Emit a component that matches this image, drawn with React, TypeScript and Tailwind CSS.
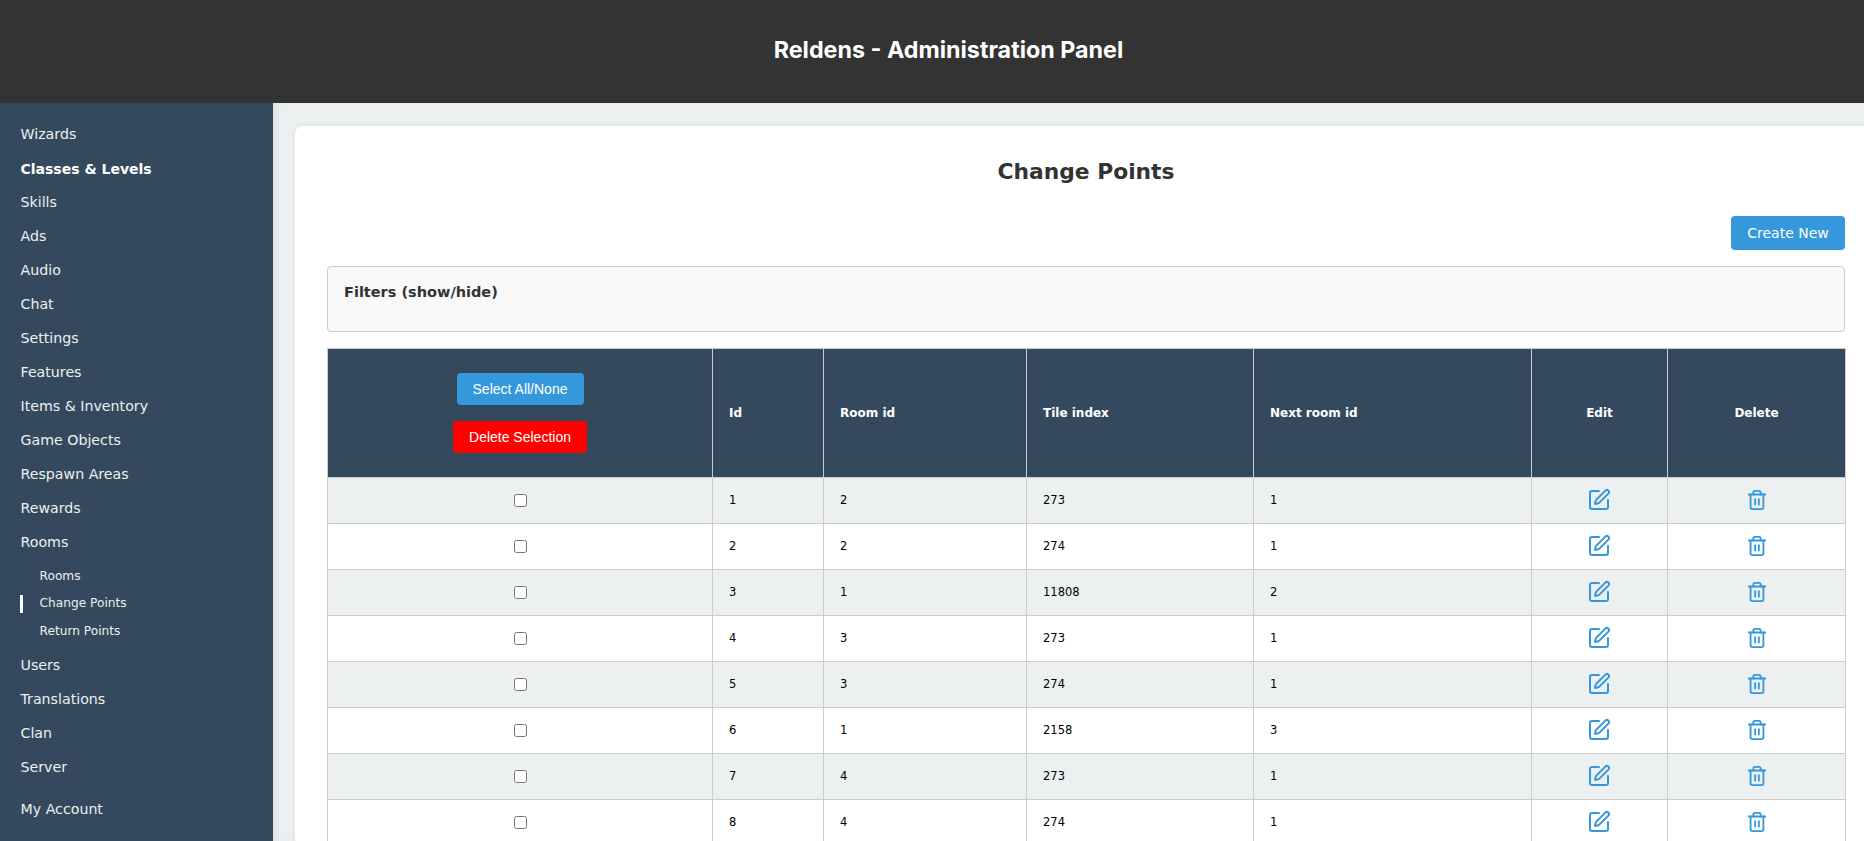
import { SquarePen, Trash2 } from "lucide-react";

const nav = ["Wizards", "Classes & Levels", "Skills", "Ads", "Audio", "Chat", "Settings", "Features", "Items & Inventory", "Game Objects", "Respawn Areas", "Rewards", "Rooms"];
const nav2 = ["Users", "Translations", "Clan", "Server"];
const rows = [
  [1, 2, 273, 1],
  [2, 2, 274, 1],
  [3, 1, 11808, 2],
  [4, 3, 273, 1],
  [5, 3, 274, 1],
  [6, 1, 2158, 3],
  [7, 4, 273, 1],
  [8, 4, 274, 1],
];

function NavItem({ label }: { label: string }) {
  const bold = label === "Classes & Levels";
  return (
    <a className={`flex h-[34px] items-center pl-[20.5px] text-[#ecf0f1] ${bold ? "text-[14px] font-bold text-white" : "text-[14.2px]"}`}>{label}</a>
  );
}

function SubItem({ label, active }: { label: string; active?: boolean }) {
  return (
    <a className="relative flex h-[27.5px] items-center pl-[39.5px] text-[12.2px] text-[#ecf0f1]">
      {active && <span className="absolute left-5 top-[5px] h-[18px] w-[3px] bg-white" />}
      {label}
    </a>
  );
}

export default function App() {
  return (
    <div className="flex h-[841px] flex-col overflow-hidden font-['DejaVu_Sans',Verdana,sans-serif] text-[#333]">
      <header className="flex h-[103px] shrink-0 items-center justify-center bg-[#333333] pb-[2px] pl-[33px]">
        <h1 className="font-['Inter',sans-serif] text-[23.3px] font-bold text-white">Reldens - Administration Panel</h1>
      </header>
      <div className="flex min-h-0 flex-1">
        <nav className="w-[273px] shrink-0 bg-[#34495e] pt-[15px]">
          {nav.map((n) => <NavItem key={n} label={n} />)}
          <div className="pb-1 pt-[2px]">
            <SubItem label="Rooms" />
            <SubItem label="Change Points" active />
            <SubItem label="Return Points" />
          </div>
          {nav2.map((n) => <NavItem key={n} label={n} />)}
          <div className="mt-2"><NavItem label="My Account" /></div>
        </nav>
        <main className="min-w-0 flex-1 overflow-hidden bg-[#ecf0f1] pl-[22px] pt-[23px] shadow-[inset_6px_0_8px_-4px_rgba(0,0,0,0.08)]">
          <div className="w-[1582px] rounded-lg bg-white px-8 pt-[31px] shadow-[0_0_6px_rgba(0,0,0,0.08)]">
            <h2 className="text-center text-[21.8px] font-bold leading-[30px]">Change Points</h2>
            <div className="mt-[29px] flex justify-end">
              <button className="h-[34px] w-[114px] rounded bg-[#3498db] text-[14px] text-white">Create New</button>
            </div>
            <div className="mt-4 h-[66px] rounded border border-[#cccccc] bg-[#f9f9f9] pl-4 pt-[15px] text-[14.5px] font-bold leading-5">
              Filters (show/hide)
            </div>
            <table className="mt-4 w-full table-fixed border-collapse text-[11.5px]">
              <colgroup>
                <col className="w-[385px]" />
                <col className="w-[111px]" />
                <col className="w-[203px]" />
                <col className="w-[227px]" />
                <col className="w-[278px]" />
                <col className="w-[136px]" />
                <col className="w-[178px]" />
              </colgroup>
              <thead>
                <tr className="h-[129px] bg-[#34495e] text-[12px] text-white">
                  <th className="border border-[#cccccc]">
                    <div className="flex flex-col items-center gap-4 font-['Liberation_Sans',Arial,sans-serif] text-[14px] font-normal">
                      <button className="h-8 w-[127px] rounded bg-[#3498db]">Select All/None</button>
                      <button className="h-8 w-[134px] rounded bg-[#ff0000]">Delete Selection</button>
                    </div>
                  </th>
                  {["Id", "Room id", "Tile index", "Next room id"].map((h) => (
                    <th key={h} className="border border-[#cccccc] pl-4 text-left font-bold">{h}</th>
                  ))}
                  <th className="border border-[#cccccc] font-bold">Edit</th>
                  <th className="border border-[#cccccc] font-bold">Delete</th>
                </tr>
              </thead>
              <tbody>
                {rows.map((r, i) => (
                  <tr key={r[0]} className={`h-[46px] text-black ${i % 2 === 0 ? "bg-[#ecf0f1]" : "bg-white"}`}>
                    <td className="border border-[#cccccc] text-center">
                      <input type="checkbox" className="align-middle" />
                    </td>
                    {r.map((v, j) => (
                      <td key={j} className="border border-[#cccccc] pl-4">{v}</td>
                    ))}
                    <td className="border border-[#cccccc]">
                      <SquarePen size={24} strokeWidth={2} className="mx-auto -translate-x-px -translate-y-px text-[#3498db]" />
                    </td>
                    <td className="border border-[#cccccc]">
                      <Trash2 size={22} strokeWidth={2} className="mx-auto -translate-y-px text-[#3498db]" />
                    </td>
                  </tr>
                ))}
              </tbody>
            </table>
          </div>
        </main>
      </div>
    </div>
  );
}
